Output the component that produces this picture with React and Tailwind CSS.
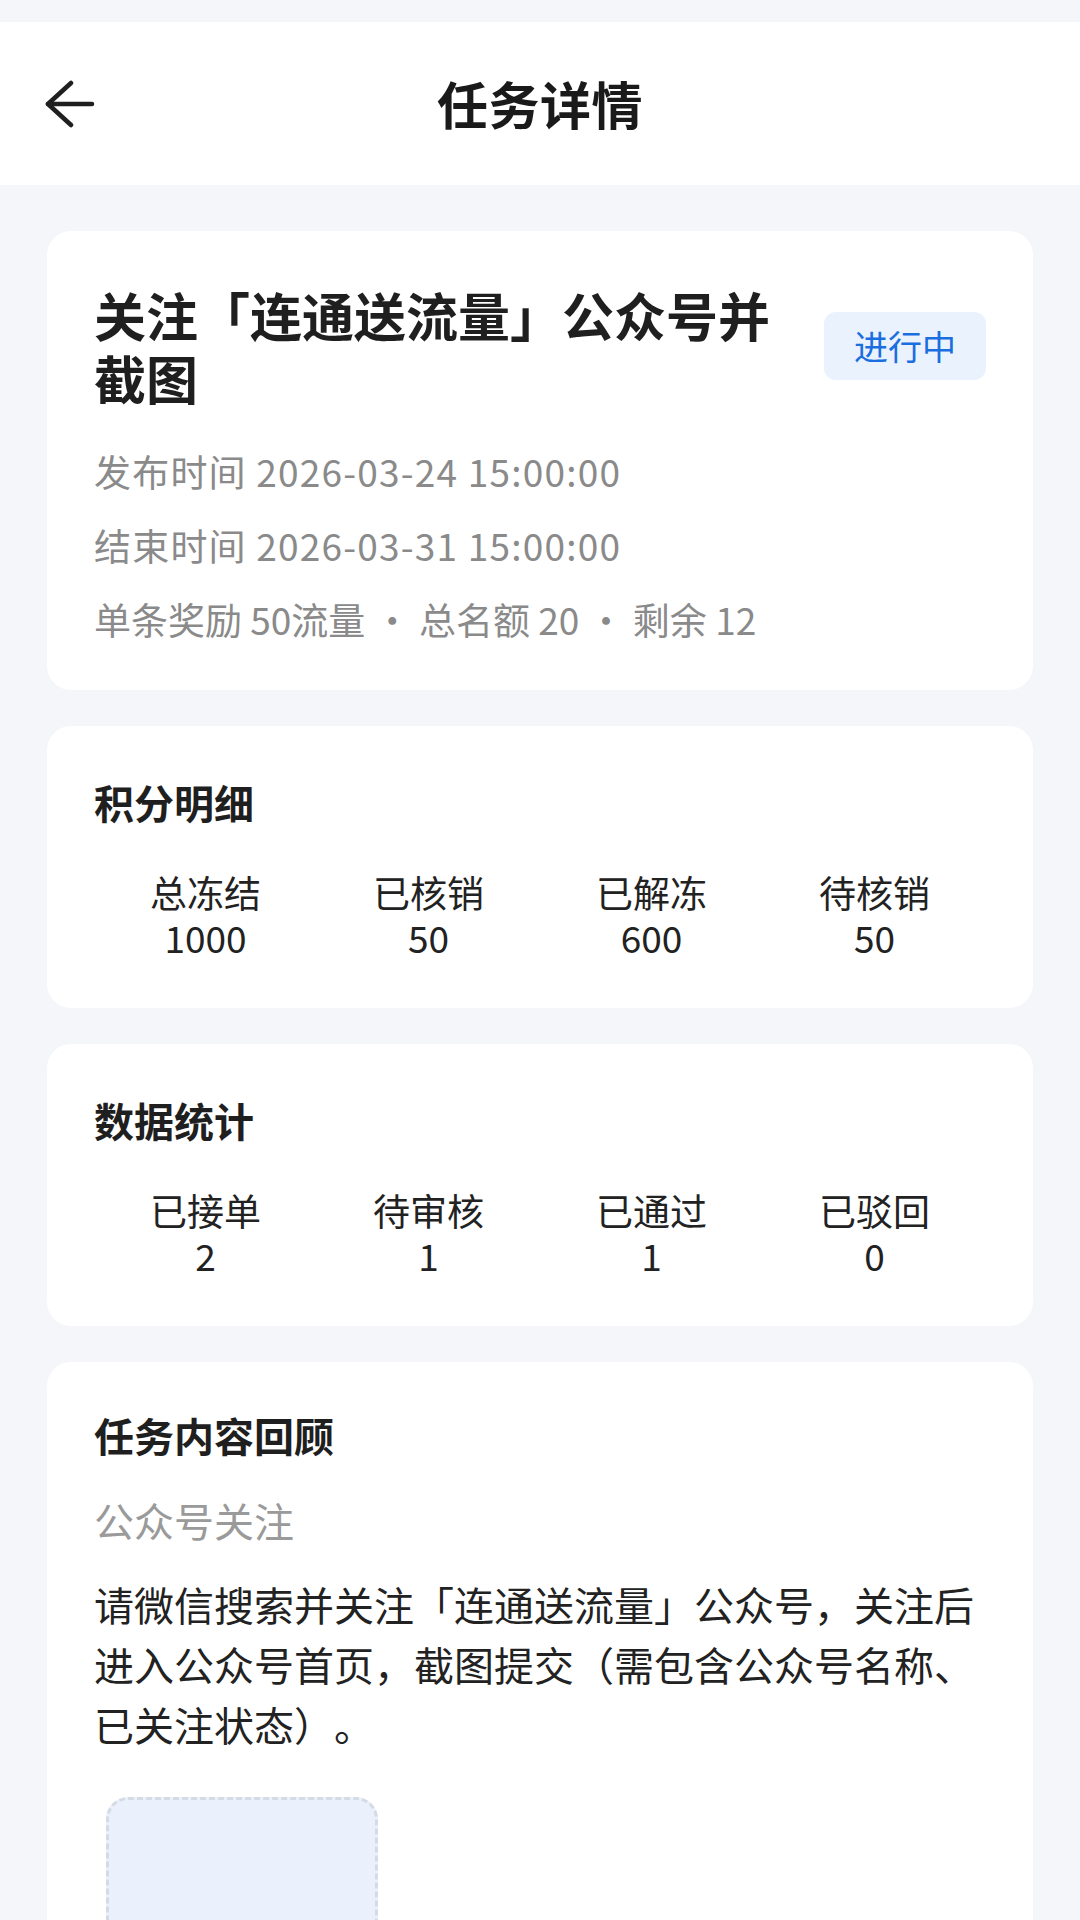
import React from 'react';

const FONT = "font-['Noto_Sans_CJK_SC','Noto_Sans',sans-serif]";

function StatGrid({ items }) {
  return (
    <div className="mt-[42px] grid grid-cols-4 text-center text-[37px] leading-[45px] text-[#222222]">
      {items.map((item) => (
        <div key={item.label} className="flex flex-col items-center">
          <span>{item.label}</span>
          <span>{item.value}</span>
        </div>
      ))}
    </div>
  );
}

function App() {
  const points = [
    { label: '总冻结', value: '1000' },
    { label: '已核销', value: '50' },
    { label: '已解冻', value: '600' },
    { label: '待核销', value: '50' },
  ];

  const stats = [
    { label: '已接单', value: '2' },
    { label: '待审核', value: '1' },
    { label: '已通过', value: '1' },
    { label: '已驳回', value: '0' },
  ];

  return (
    <div className={`${FONT} min-h-screen bg-[#f4f6fa] text-[#222222] [text-spacing-trim:space-all]`}>
      {/* Status bar spacer */}
      <div className="h-[22px]" />

      {/* Header */}
      <header className="relative flex h-[163px] items-center justify-center bg-white">
        <button className="absolute left-[44px] top-1/2 -translate-y-1/2">
          <svg width="52" height="48" viewBox="0 0 52 48" fill="none" stroke="#1f1f1f" strokeWidth="4.5" strokeLinecap="round" strokeLinejoin="round">
            <path d="M27 3 L4 24 L27 45" />
            <path d="M4 24 H48" />
          </svg>
        </button>
        <h1 className="text-[51px] font-bold tracking-[0.5px] text-[#1a1a1a]">任务详情</h1>
      </header>

      <main className="flex flex-col gap-[36px] px-[47px] pt-[46px]">
        {/* Task summary */}
        <section className="rounded-[24px] bg-white px-[47px] pb-[46px] pt-[52px]">
          <div className="flex items-center gap-[24px]">
            <h2 className="flex-1 text-[52px] font-bold leading-[63px] text-[#1f1f1f]">
              关注「连通送流量」公众号并截图
            </h2>
            <span className="rounded-[12px] bg-[#eaf2fd] px-[30px] py-[10px] text-[34px] leading-[48px] text-[#1a6ee0]">
              进行中
            </span>
          </div>
          <div className="mt-[37px] flex flex-col gap-[24px] text-[37px] leading-[50px] text-[#8a8a8a]">
            <p className="tracking-[1.2px]">发布时间 2026-03-24 15:00:00</p>
            <p className="tracking-[1.2px]">结束时间 2026-03-31 15:00:00</p>
            <p>单条奖励 50流量 · 总名额 20 · 剩余 12</p>
          </div>
        </section>

        {/* Points */}
        <section className="rounded-[24px] bg-white px-[47px] pb-[48px] pt-[50px]">
          <h3 className="text-[40px] font-bold leading-[52px] text-[#1f1f1f]">积分明细</h3>
          <StatGrid items={points} />
        </section>

        {/* Data stats */}
        <section className="rounded-[24px] bg-white px-[47px] pb-[48px] pt-[50px]">
          <h3 className="text-[40px] font-bold leading-[52px] text-[#1f1f1f]">数据统计</h3>
          <StatGrid items={stats} />
        </section>

        {/* Task content review */}
        <section className="rounded-[24px] bg-white px-[47px] pb-[47px] pt-[47px]">
          <h3 className="text-[40px] font-bold leading-[52px] text-[#1f1f1f]">任务内容回顾</h3>
          <p className="mt-[33px] text-[40px] leading-[52px] text-[#9a9a9a]">公众号关注</p>
          <p className="mt-[28px] text-[40px] leading-[60px] text-[#222222]">
            请微信搜索并关注「连通送流量」公众号，关注后进入公众号首页，截图提交（需包含公众号名称、已关注状态）。
          </p>
          <div className="ml-[12px] mt-[43px] flex h-[282px] w-[272px] items-center justify-center rounded-[22px] border-[3px] border-dashed border-[#d5dbe5] bg-[#eaf1fc]">
            <span className="text-[36px] font-medium text-[#1a6ee0]">公众号示例图</span>
          </div>
        </section>
      </main>
    </div>
  );
}

export default App;
